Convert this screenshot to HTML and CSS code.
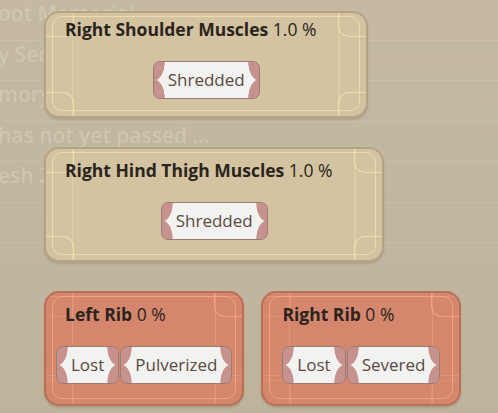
FILE: index.html
```html
<!DOCTYPE html>
<html lang="en">
<head>
    <meta charset="UTF-8">
    <meta name="viewport" content="width=device-width, initial-scale=1.0">
    <title>Injuries</title>
    <link rel="stylesheet" href="styles.css">
</head>
<body>
    <div class="stage">
        <div class="backdrop">
            <div class="ghost-row">oot Memorial</div>
            <div class="ghost-row">y Second Life</div>
            <div class="ghost-row">mory</div>
            <div class="ghost-row">has not yet passed ...</div>
            <div class="ghost-row">esh 2</div>
            <div class="ghost-row"></div>
        </div>

        <main class="cards">
            <section class="card card--tight">
                <span class="orn orn-tl"></span><span class="orn orn-tr"></span>
                <span class="orn orn-bl"></span><span class="orn orn-br"></span>
                <h2 class="card-title"><b>Right Shoulder Muscles</b> 1.0 %</h2>
                <div class="chips">
                    <span class="chip">Shredded</span>
                </div>
            </section>

            <section class="card">
                <span class="orn orn-tl"></span><span class="orn orn-tr"></span>
                <span class="orn orn-bl"></span><span class="orn orn-br"></span>
                <h2 class="card-title"><b>Right Hind Thigh Muscles</b> 1.0 %</h2>
                <div class="chips">
                    <span class="chip">Shredded</span>
                </div>
            </section>

            <div class="card-row">
                <section class="card card--lost">
                    <span class="orn orn-tl"></span><span class="orn orn-tr"></span>
                    <span class="orn orn-bl"></span><span class="orn orn-br"></span>
                    <h2 class="card-title"><b>Left Rib</b> 0 %</h2>
                    <div class="chips">
                        <span class="chip">Lost</span>
                        <span class="chip">Pulverized</span>
                    </div>
                </section>
                <section class="card card--lost">
                    <span class="orn orn-tl"></span><span class="orn orn-tr"></span>
                    <span class="orn orn-bl"></span><span class="orn orn-br"></span>
                    <h2 class="card-title"><b>Right Rib</b> 0 %</h2>
                    <div class="chips">
                        <span class="chip">Lost</span>
                        <span class="chip">Severed</span>
                    </div>
                </section>
            </div>
        </main>
    </div>
</body>
</html>
```

FILE: styles.css
```css
body {
    margin: 0;
    background: linear-gradient(180deg, #c5b9a3, #beb39c);
    font-family: 'Open Sans', 'Noto Sans', sans-serif;
    color: #2b241d;
    height: 413px;
    overflow: hidden;
}
.stage {
    display: grid;
}
.backdrop, .cards {
    grid-area: 1 / 1;
}

/* faded list behind the cards */
.backdrop {
    margin: 0 0 0 -2px;
}
.ghost-row {
    height: 40.5px;
    line-height: 26px;
    font-size: 21px;
    font-weight: 600;
    color: rgba(236, 228, 212, 0.33);
    border-bottom: 1px solid rgba(236, 228, 212, 0.16);
    box-sizing: border-box;
    white-space: nowrap;
    overflow: hidden;
}

.cards {
    display: flex;
    flex-direction: column;
    align-items: flex-start;
    gap: 29px;
    padding: 11px 0 0 44px;
}
.card-row {
    display: flex;
    gap: 17px;
}

.card {
    --line: rgba(244, 230, 178, 0.9);
    position: relative;
    box-sizing: border-box;
    min-width: 200px;
    display: flex;
    flex-direction: column;
    align-items: center;
    padding: 10px 10px 20px;
    background: #d3c3a0;
    border: 2px solid #b5a383;
    border-radius: 15px;
    box-shadow: 0 2px 2px rgba(90, 70, 40, 0.18);
}
.card--tight {
    padding-top: 5px;
    padding-bottom: 17px;
}
.card--lost {
    --line: rgba(250, 168, 134, 0.95);
    background: #d4876d;
    border-color: #b96f58;
}
.card::before {
    content: "";
    position: absolute;
    inset: 3px 6px 5px 6px;
    border: 1.5px solid var(--line);
    border-radius: 10px;
    opacity: 0.8;
}
.card::after {
    content: "";
    position: absolute;
    inset: 0;
    border-radius: 13px;
    opacity: 0.35;
    background:
        linear-gradient(90deg, transparent 26px, var(--line) 26px, var(--line) 27.5px, transparent 27.5px),
        linear-gradient(270deg, transparent 26px, var(--line) 26px, var(--line) 27.5px, transparent 27.5px);
}
.card--lost::after {
    opacity: 0.45;
    background:
        linear-gradient(90deg, transparent 26px, var(--line) 26px, var(--line) 27.5px, transparent 27.5px),
        linear-gradient(270deg, transparent 26px, var(--line) 26px, var(--line) 27.5px, transparent 27.5px),
        linear-gradient(180deg, transparent 3px, var(--line) 3px, var(--line) 4.5px, transparent 4.5px),
        linear-gradient(0deg, transparent 28px, var(--line) 28px, var(--line) 29.5px, transparent 29.5px);
}

/* corner ornaments */
.orn {
    position: absolute;
    width: 27px;
    height: 23px;
    border: 0 solid var(--line);
    opacity: 0.9;
}
.orn-tl {
    top: 0;
    left: 0;
    border-right-width: 1.5px;
    border-bottom-width: 1.5px;
    border-bottom-right-radius: 11px;
}
.orn-tr {
    top: 0;
    right: 0;
    border-left-width: 1.5px;
    border-bottom-width: 1.5px;
    border-bottom-left-radius: 11px;
}
.orn-bl {
    bottom: 0;
    left: 0;
    border-right-width: 1.5px;
    border-top-width: 1.5px;
    border-top-right-radius: 11px;
}
.orn-br {
    bottom: 0;
    right: 0;
    border-left-width: 1.5px;
    border-top-width: 1.5px;
    border-top-left-radius: 11px;
}
.card--lost .orn-tl, .card--lost .orn-bl, .card--lost .orn-br {
    opacity: 0.35;
}

.card-title {
    position: relative;
    z-index: 1;
    align-self: flex-start;
    margin: 0;
    padding: 0 40px 0 9px;
    font-size: 17.5px;
    line-height: 22px;
    font-weight: 400;
    white-space: nowrap;
}
.card-title b {
    font-weight: 700;
}

.chips {
    position: relative;
    z-index: 1;
    display: flex;
    gap: 1px;
    margin-top: 21px;
}
.chip {
    box-sizing: border-box;
    height: 38px;
    padding: 0 14px;
    font-size: 17px;
    line-height: 36px;
    color: #5a4a42;
    border: 1px solid #9a7c77;
    border-radius: 7px;
    background:
        radial-gradient(ellipse 11px 19px at 0 0, #c7928e 94%, transparent 100%),
        radial-gradient(ellipse 11px 19px at 100% 0, #c7928e 94%, transparent 100%),
        radial-gradient(ellipse 11px 19px at 0 100%, #c7928e 94%, transparent 100%),
        radial-gradient(ellipse 11px 19px at 100% 100%, #c7928e 94%, transparent 100%),
        #f2f2f0;
}
```
